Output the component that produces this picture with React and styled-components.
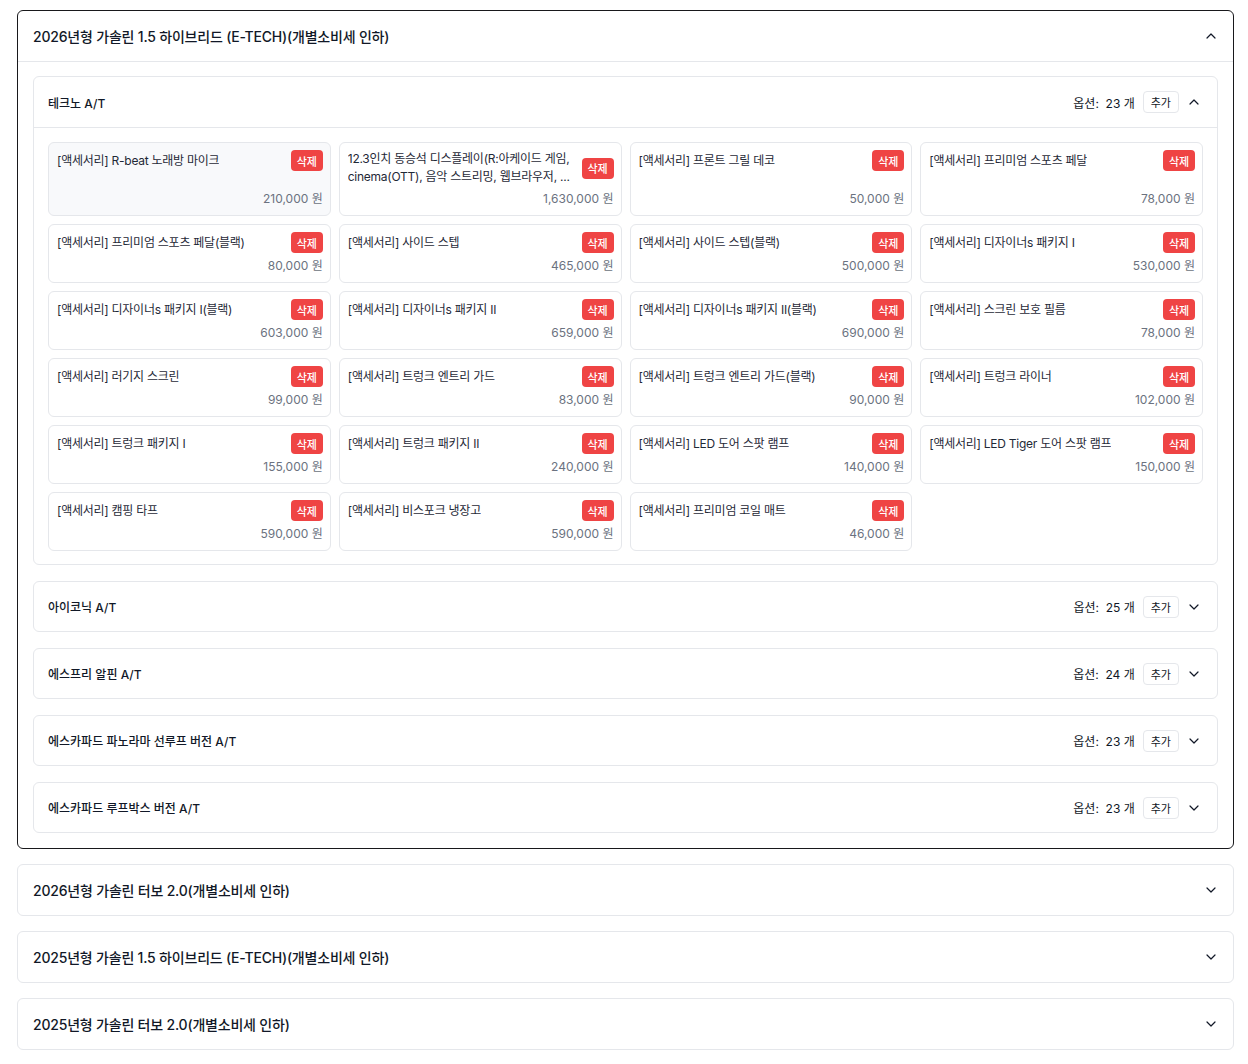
import React, { useState } from 'react';
import styled, { createGlobalStyle } from 'styled-components';
import { ChevronDown, ChevronUp } from 'lucide-react';

const GlobalStyle = createGlobalStyle`
  * { box-sizing: border-box; }
  body {
    margin: 0;
    background: #fff;
    font-family: 'Inter', 'Noto Sans CJK KR', sans-serif;
    color: #111827;
  }
`;

const Page = styled.div`
  display: flex;
  flex-direction: column;
  gap: 15px;
  padding: 10px 14px 16px 17px;
`;

const Section = styled.div`
  border: 1px solid ${(p) => (p.$open ? '#18181b' : '#e5e7eb')};
  border-radius: 6px;
  background: #fff;
`;

const SectionHeader = styled.div`
  height: ${(p) => (p.$open ? '51px' : '50px')};
  display: flex;
  align-items: center;
  justify-content: space-between;
  padding: 0 14px 0 15px;
  border-bottom: ${(p) => (p.$open ? '1px solid #e5e7eb' : 'none')};
  cursor: pointer;
`;

const SectionTitle = styled.div`
  font-size: 14px;
  font-weight: 500;
  letter-spacing: -0.2px;
`;

const SectionBody = styled.div`
  display: flex;
  flex-direction: column;
  gap: 16px;
  padding: 14px 15px 15px;
`;

const Trim = styled.div`
  border: 1px solid #e5e7eb;
  border-radius: 6px;
`;

const TrimHeader = styled.div`
  height: ${(p) => (p.$open ? '51px' : '49px')};
  display: flex;
  align-items: center;
  justify-content: space-between;
  padding: 0 15px 0 14px;
  border-bottom: ${(p) => (p.$open ? '1px solid #e5e7eb' : 'none')};
`;

const TrimTitle = styled.div`
  font-size: 12px;
  font-weight: 500;
`;

const TrimMeta = styled.div`
  display: flex;
  align-items: center;
  gap: 8px;
  font-size: 12px;
  color: #111827;
`;

const Count = styled.span`
  white-space: pre;
`;

const AddButton = styled.button`
  height: 22px;
  padding: 0 7px;
  border: 1px solid #e5e7eb;
  border-radius: 4px;
  background: #fff;
  font-family: inherit;
  font-size: 11px;
  color: #111827;
  margin-right: -1px;
`;

const Grid = styled.div`
  display: grid;
  grid-template-columns: repeat(4, 1fr);
  gap: 8px;
  padding: 14px 14px 13px;
`;

const Card = styled.div`
  display: flex;
  flex-direction: column;
  justify-content: space-between;
  gap: 4px;
  padding: 7px;
  padding-left: 8px;
  border: 1px solid #e5e7eb;
  border-radius: 6px;
  background: ${(p) => (p.$active ? '#f8f9fb' : '#fff')};
`;

const CardTop = styled.div`
  display: flex;
  align-items: center;
  justify-content: space-between;
  gap: 8px;
  min-height: 21px;
`;

const CardName = styled.div`
  font-size: 12px;
  line-height: 18px;
  letter-spacing: -0.25px;
  color: #1f2937;
  word-break: keep-all;
  display: -webkit-box;
  -webkit-line-clamp: 2;
  -webkit-box-orient: vertical;
  overflow: hidden;
`;

const DeleteButton = styled.button`
  flex-shrink: 0;
  height: 21px;
  width: 32px;
  padding: 0;
  border: none;
  border-radius: 4px;
  background: #ef4444;
  color: #fff;
  font-family: inherit;
  font-size: 11px;
  font-weight: 500;
`;

const Price = styled.div`
  text-align: right;
  font-size: 12px;
  line-height: 18px;
  color: #6b7280;
`;

const items = [
  ['[액세서리] R-beat 노래방 마이크', '210,000'],
  ['12.3인치 동승석 디스플레이(R:아케이드 게임, cinema(OTT), 음악 스트리밍, 웹브라우저, ...', '1,630,000'],
  ['[액세서리] 프론트 그릴 데코', '50,000'],
  ['[액세서리] 프리미엄 스포츠 페달', '78,000'],
  ['[액세서리] 프리미엄 스포츠 페달(블랙)', '80,000'],
  ['[액세서리] 사이드 스텝', '465,000'],
  ['[액세서리] 사이드 스텝(블랙)', '500,000'],
  ['[액세서리] 디자이너s 패키지 I', '530,000'],
  ['[액세서리] 디자이너s 패키지 I(블랙)', '603,000'],
  ['[액세서리] 디자이너s 패키지 II', '659,000'],
  ['[액세서리] 디자이너s 패키지 II(블랙)', '690,000'],
  ['[액세서리] 스크린 보호 필름', '78,000'],
  ['[액세서리] 러기지 스크린', '99,000'],
  ['[액세서리] 트렁크 엔트리 가드', '83,000'],
  ['[액세서리] 트렁크 엔트리 가드(블랙)', '90,000'],
  ['[액세서리] 트렁크 라이너', '102,000'],
  ['[액세서리] 트렁크 패키지 I', '155,000'],
  ['[액세서리] 트렁크 패키지 II', '240,000'],
  ['[액세서리] LED 도어 스팟 램프', '140,000'],
  ['[액세서리] LED Tiger 도어 스팟 램프', '150,000'],
  ['[액세서리] 캠핑 타프', '590,000'],
  ['[액세서리] 비스포크 냉장고', '590,000'],
  ['[액세서리] 프리미엄 코일 매트', '46,000'],
];

const trims = [
  { name: '테크노 A/T', count: 23, open: true },
  { name: '아이코닉 A/T', count: 25 },
  { name: '에스프리 알핀 A/T', count: 24 },
  { name: '에스카파드 파노라마 선루프 버전 A/T', count: 23 },
  { name: '에스카파드 루프박스 버전 A/T', count: 23 },
];

const models = [
  { name: '2026년형 가솔린 1.5 하이브리드 (E-TECH)(개별소비세 인하)' },
  { name: '2026년형 가솔린 터보 2.0(개별소비세 인하)' },
  { name: '2025년형 가솔린 1.5 하이브리드 (E-TECH)(개별소비세 인하)' },
  { name: '2025년형 가솔린 터보 2.0(개별소비세 인하)' },
];

function TrimBlock({ trim }) {
  const Icon = trim.open ? ChevronUp : ChevronDown;
  return (
    <Trim>
      <TrimHeader $open={trim.open}>
        <TrimTitle>{trim.name}</TrimTitle>
        <TrimMeta>
          <Count>{`옵션:  ${trim.count} 개`}</Count>
          <AddButton>추가</AddButton>
          <Icon size={16} strokeWidth={1.8} />
        </TrimMeta>
      </TrimHeader>
      {trim.open && (
        <Grid>
          {items.map(([name, price], i) => (
            <Card key={name} $active={i === 0}>
              <CardTop>
                <CardName>{name}</CardName>
                <DeleteButton>삭제</DeleteButton>
              </CardTop>
              <Price>{price} 원</Price>
            </Card>
          ))}
        </Grid>
      )}
    </Trim>
  );
}

export default function App() {
  const [openModel] = useState(0);
  return (
    <>
      <GlobalStyle />
      <Page>
        {models.map((m, i) => {
          const open = i === openModel;
          const Icon = open ? ChevronUp : ChevronDown;
          return (
            <Section key={m.name} $open={open}>
              <SectionHeader $open={open}>
                <SectionTitle>{m.name}</SectionTitle>
                <Icon size={16} strokeWidth={1.8} />
              </SectionHeader>
              {open && (
                <SectionBody>
                  {trims.map((t) => (
                    <TrimBlock key={t.name} trim={t} />
                  ))}
                </SectionBody>
              )}
            </Section>
          );
        })}
      </Page>
    </>
  );
}
